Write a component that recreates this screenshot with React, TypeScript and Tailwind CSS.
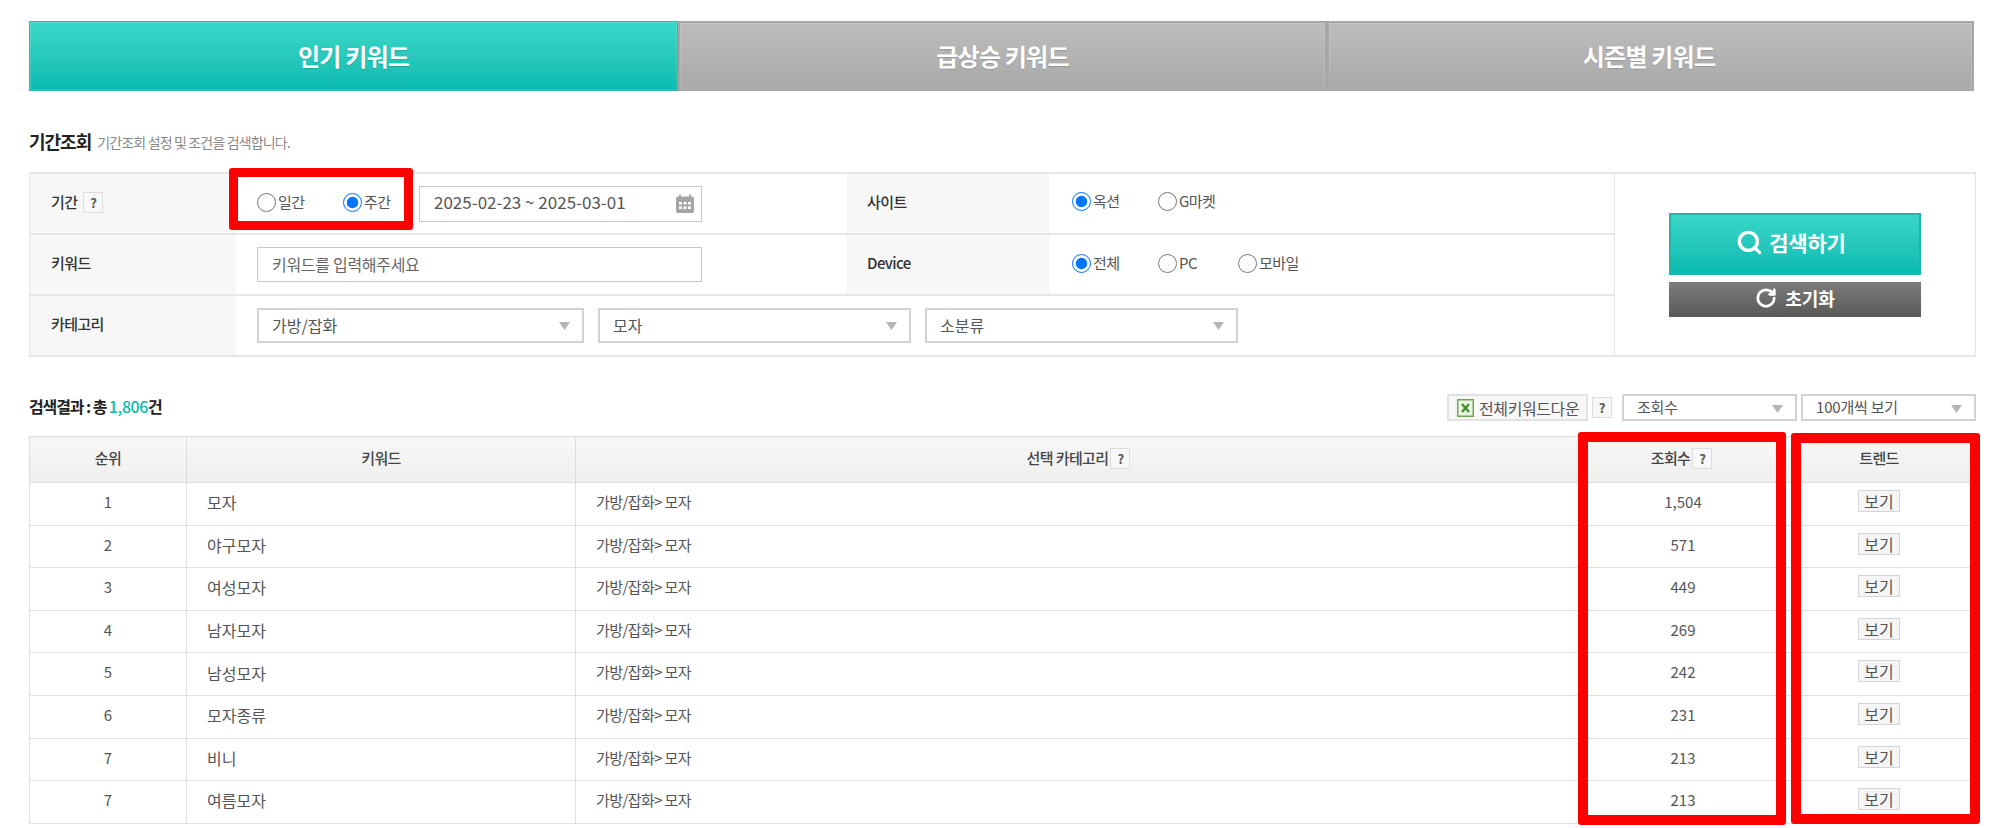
import { Search, RotateCw } from "lucide-react";

const rows = [
  { rank: 1, keyword: "모자", count: "1,504" },
  { rank: 2, keyword: "야구모자", count: "571" },
  { rank: 3, keyword: "여성모자", count: "449" },
  { rank: 4, keyword: "남자모자", count: "269" },
  { rank: 5, keyword: "남성모자", count: "242" },
  { rank: 6, keyword: "모자종류", count: "231" },
  { rank: 7, keyword: "비니", count: "213" },
  { rank: 7, keyword: "여름모자", count: "213" },
];

const Help = () => (
  <span className="inline-flex h-[21px] w-[20px] items-center justify-center border border-[#ddd] bg-[#f8f8f8] text-[13px] font-bold leading-none text-[#555]">
    ?
  </span>
);

const Radio = ({ label, checked, className }: { label: string; checked?: boolean; className: string }) => (
  <label className={`flex items-center gap-[2px] ${className}`}>
    <input type="radio" checked={!!checked} readOnly className="m-0 h-[19px] w-[19px] shrink-0" />
    <span className="tracking-[-0.6px]">{label}</span>
  </label>
);

const SelectBox = ({ label, className }: { label: string; className: string }) => (
  <div className={`flex items-center justify-between border-2 border-[#d2d2d2] bg-white pl-[13px] pr-[12px] text-[#555] ${className}`}>
    <span>{label}</span>
    <svg width="11" height="8" viewBox="0 0 11 8" className="mt-[2px]">
      <path d="M0 0h11L5.5 8z" fill="#b5b5b5" />
    </svg>
  </div>
);

const Label = ({ children, className = "" }: { children: React.ReactNode; className?: string }) => (
  <div className={`flex items-center gap-[6px] border-[#e6e6e6] bg-[#f7f7f7] pb-[2px] pl-[21px] text-[15px] font-medium tracking-[-0.6px] text-[#333] ${className}`}>
    {children}
  </div>
);

const CalendarIcon = () => (
  <svg width="20" height="20" viewBox="0 0 20 20">
    <rect x="1" y="2.5" width="18" height="16.5" rx="2" fill="#a5a5a5" />
    <rect x="4" y="0.5" width="2" height="4" fill="#a5a5a5" />
    <rect x="14" y="0.5" width="2" height="4" fill="#a5a5a5" />
    <g fill="#fff">
      <rect x="4" y="8" width="3" height="2.5" />
      <rect x="8.5" y="8" width="3" height="2.5" />
      <rect x="13" y="8" width="3" height="2.5" />
      <rect x="4" y="12.5" width="3" height="2.5" />
      <rect x="8.5" y="12.5" width="3" height="2.5" />
      <rect x="13" y="12.5" width="3" height="2.5" />
    </g>
  </svg>
);

const ExcelIcon = () => (
  <svg width="17" height="18" viewBox="0 0 17 18">
    <rect x="0.75" y="0.75" width="15.5" height="16.5" fill="#eef6e8" stroke="#6aa84f" strokeWidth="1.5" />
    <path d="M5 5l7 8M12 5l-7 8" stroke="#3f8f2f" strokeWidth="2.4" />
  </svg>
);

const Th = ({ children, className = "" }: { children: React.ReactNode; className?: string }) => (
  <th className={`border border-[#dcdcdc] bg-gradient-to-b from-[#f7f7f7] to-[#efefef] pb-[2px] text-center text-[15px] font-medium tracking-[-0.6px] text-[#444] ${className}`}>
    {children}
  </th>
);

export default function App() {
  return (
    <div className="relative h-[828px] overflow-hidden bg-white text-[15px] text-[#555] [font-family:'Noto_Sans_CJK_KR','Noto_Sans',sans-serif]">
      <div className="ml-[29px] w-[1947px] pt-[21px]">
        {/* tabs */}
        <div className="flex h-[70px] w-[1945px] text-[24px] font-bold tracking-[-0.8px] text-white">
          <div className="flex w-[649px] items-center justify-center border border-[#2fb5aa] bg-gradient-to-b from-[#3ad8ca] to-[#08bbaf] shadow-[inset_0_0_0_1px_rgba(255,255,255,0.15)] [text-shadow:0_1px_1px_rgba(0,0,0,0.15)]">
            인기 키워드
          </div>
          <div className="flex w-[649px] items-center justify-center border-2 border-[#a6a6a6] bg-gradient-to-b from-[#bdbdbd] to-[#a9a9a9] shadow-[inset_0_0_0_1px_rgba(255,255,255,0.12)] [text-shadow:0_1px_1px_rgba(0,0,0,0.15)]">
            급상승 키워드
          </div>
          <div className="flex flex-1 items-center justify-center border-2 border-[#a6a6a6] bg-gradient-to-b from-[#bdbdbd] to-[#a9a9a9] pr-[3px] shadow-[inset_0_0_0_1px_rgba(255,255,255,0.12)] [text-shadow:0_1px_1px_rgba(0,0,0,0.15)]">
            시즌별 키워드
          </div>
        </div>

        {/* heading */}
        <div className="mb-[15px] mt-[38px] flex h-[28px] items-center gap-[6px] pb-[4px]">
          <span className="text-[18px] font-bold tracking-[-1px] text-[#222]">기간조회</span>
          <span className="mt-[2px] text-[14px] tracking-[-0.85px] text-[#888]">기간조회 설정 및 조건을 검색합니다.</span>
        </div>

        {/* filter */}
        <div className="grid h-[185px] grid-cols-[206px_610px_204px_564px_1fr] grid-rows-[61px_61px_1fr] border-x border-y-2 border-[#e6e6e6] bg-white">
          <Label className="border-b-2">
            기간 <Help />
          </Label>
          <div className="flex items-center border-b-2 border-[#e6e6e6] pl-[21px]">
            <Radio label="일간" className="w-[86px] pb-[3px]" />
            <Radio label="주간" className="w-[76px] pb-[3px]" checked />
            <div className="flex h-[36px] w-[283px] items-center justify-between border border-[#c8c8c8] pl-[14px] pr-[6px]">
              <span className="pb-[4px] text-[17px]">2025-02-23 ~ 2025-03-01</span>
              <CalendarIcon />
            </div>
          </div>
          <Label className="border-b-2">사이트</Label>
          <div className="flex items-center border-b-2 border-[#e6e6e6] pb-[4px] pl-[22px]">
            <Radio label="옥션" className="w-[86px]" checked />
            <Radio label="G마켓" className="w-[80px]" />
          </div>
          <div className="row-span-3 flex flex-col items-center justify-center border-l border-[#e6e6e6]">
            <button className="flex h-[62px] w-[252px] items-center justify-center gap-[6px] border-2 border-[#1fb5a9] bg-gradient-to-b from-[#38d6c9] to-[#08bbaf] pb-[2px] pr-[8px] text-[21px] font-bold tracking-[-0.2px] text-white">
              <Search size={27} strokeWidth={3} />
              검색하기
            </button>
            <button className="mt-[7px] flex h-[35px] w-[252px] items-center justify-center gap-[8px] bg-gradient-to-b from-[#7d7d7d] to-[#585858] pb-[2px] text-[18px] font-bold text-white">
              <RotateCw size={22} strokeWidth={3} />
              초기화
            </button>
          </div>

          <Label className="border-b-2">키워드</Label>
          <div className="flex items-center border-b-2 border-[#e6e6e6] pl-[21px]">
            <div className="flex h-[35px] w-[445px] items-center border border-[#c8c8c8] pb-[2px] pl-[14px] text-[16px] tracking-[-0.3px] text-[#666]">
              키워드를 입력해주세요
            </div>
          </div>
          <Label className="border-b-2">Device</Label>
          <div className="flex items-center border-b-2 border-[#e6e6e6] pb-[3px] pl-[22px]">
            <Radio label="전체" className="w-[86px]" checked />
            <Radio label="PC" className="w-[80px]" />
            <Radio label="모바일" className="w-[80px]" />
          </div>

          <Label>카테고리</Label>
          <div className="col-span-3 flex items-center gap-[14px] pl-[21px]">
            <SelectBox label="가방/잡화" className="h-[35px] w-[327px] pb-[2px] text-[16px]" />
            <SelectBox label="모자" className="h-[35px] w-[313px] pb-[2px] text-[16px]" />
            <SelectBox label="소분류" className="h-[35px] w-[313px] pb-[2px] text-[16px]" />
          </div>
        </div>

        {/* result bar */}
        <div className="mt-[37px] flex h-[27px] items-center justify-between">
          <div className="pb-[3px] text-[16px] font-bold tracking-[-1.1px] text-[#222]">
            검색결과 : 총 <span className="font-medium tracking-[-0.4px] text-[#0bb8ac]">1,806</span>건
          </div>
          <div className="flex items-center">
            <div className="flex h-[27px] w-[141px] items-center gap-[5px] border-2 border-[#e2e2e2] bg-[#f8f8f8] pl-[8px] text-[16px] tracking-[-0.4px]">
              <ExcelIcon />
              전체키워드다운
            </div>
            <div className="ml-[4px]">
              <Help />
            </div>
            <SelectBox label="조회수" className="ml-[10px] h-[27px] w-[175px] tracking-[-0.2px]" />
            <SelectBox label="100개씩 보기" className="ml-[4px] h-[27px] w-[175px] tracking-[-0.2px]" />
          </div>
        </div>

        {/* table */}
        <table className="mt-[15px] w-[1947px] table-fixed border-collapse">
          <colgroup>
            <col className="w-[157px]" />
            <col className="w-[389px]" />
            <col className="w-[1006px]" />
            <col className="w-[200px]" />
            <col className="w-[195px]" />
          </colgroup>
          <thead>
            <tr className="h-[46px]">
              <Th>순위</Th>
              <Th>키워드</Th>
              <Th>
                <span className="inline-flex items-center gap-[2px]">
                  선택 카테고리 <Help />
                </span>
              </Th>
              <Th>
                <span className="inline-flex items-center gap-[2px]">
                  조회수 <Help />
                </span>
              </Th>
              <Th>트렌드</Th>
            </tr>
          </thead>
          <tbody>
            {rows.map((row) => (
              <tr key={row.keyword} className="h-[42.6px]">
                <td className="border border-[#e0e0e0] pb-[3px] text-center">{row.rank}</td>
                <td className="border border-[#e0e0e0] pb-[3px] pl-[20px] text-[16px]">{row.keyword}</td>
                <td className="border border-[#e0e0e0] pb-[3px] pl-[20px] tracking-[-0.6px]">가방/잡화&gt; 모자</td>
                <td className="border border-[#e0e0e0] pb-[3px] pl-[3px] text-center">{row.count}</td>
                <td className="border border-[#e0e0e0] pb-[4px] text-center">
                  <span className="inline-flex h-[22px] w-[42px] items-center justify-center border border-[#d5d5d5] bg-[#f5f5f5] text-[16px]">
                    보기
                  </span>
                </td>
              </tr>
            ))}
          </tbody>
        </table>
      </div>

      {/* red annotations */}
      <div className="absolute left-[229px] top-[168px] h-[62px] w-[184px] rounded-[3px] border-[9px] border-[#ff0000]" />
      <div className="absolute left-[1578px] top-[432px] h-[393px] w-[208px] rounded-[3px] border-[10px] border-[#ff0000]" />
      <div className="absolute left-[1791px] top-[433px] h-[391px] w-[189px] rounded-[3px] border-[10px] border-[#ff0000]" />
    </div>
  );
}
